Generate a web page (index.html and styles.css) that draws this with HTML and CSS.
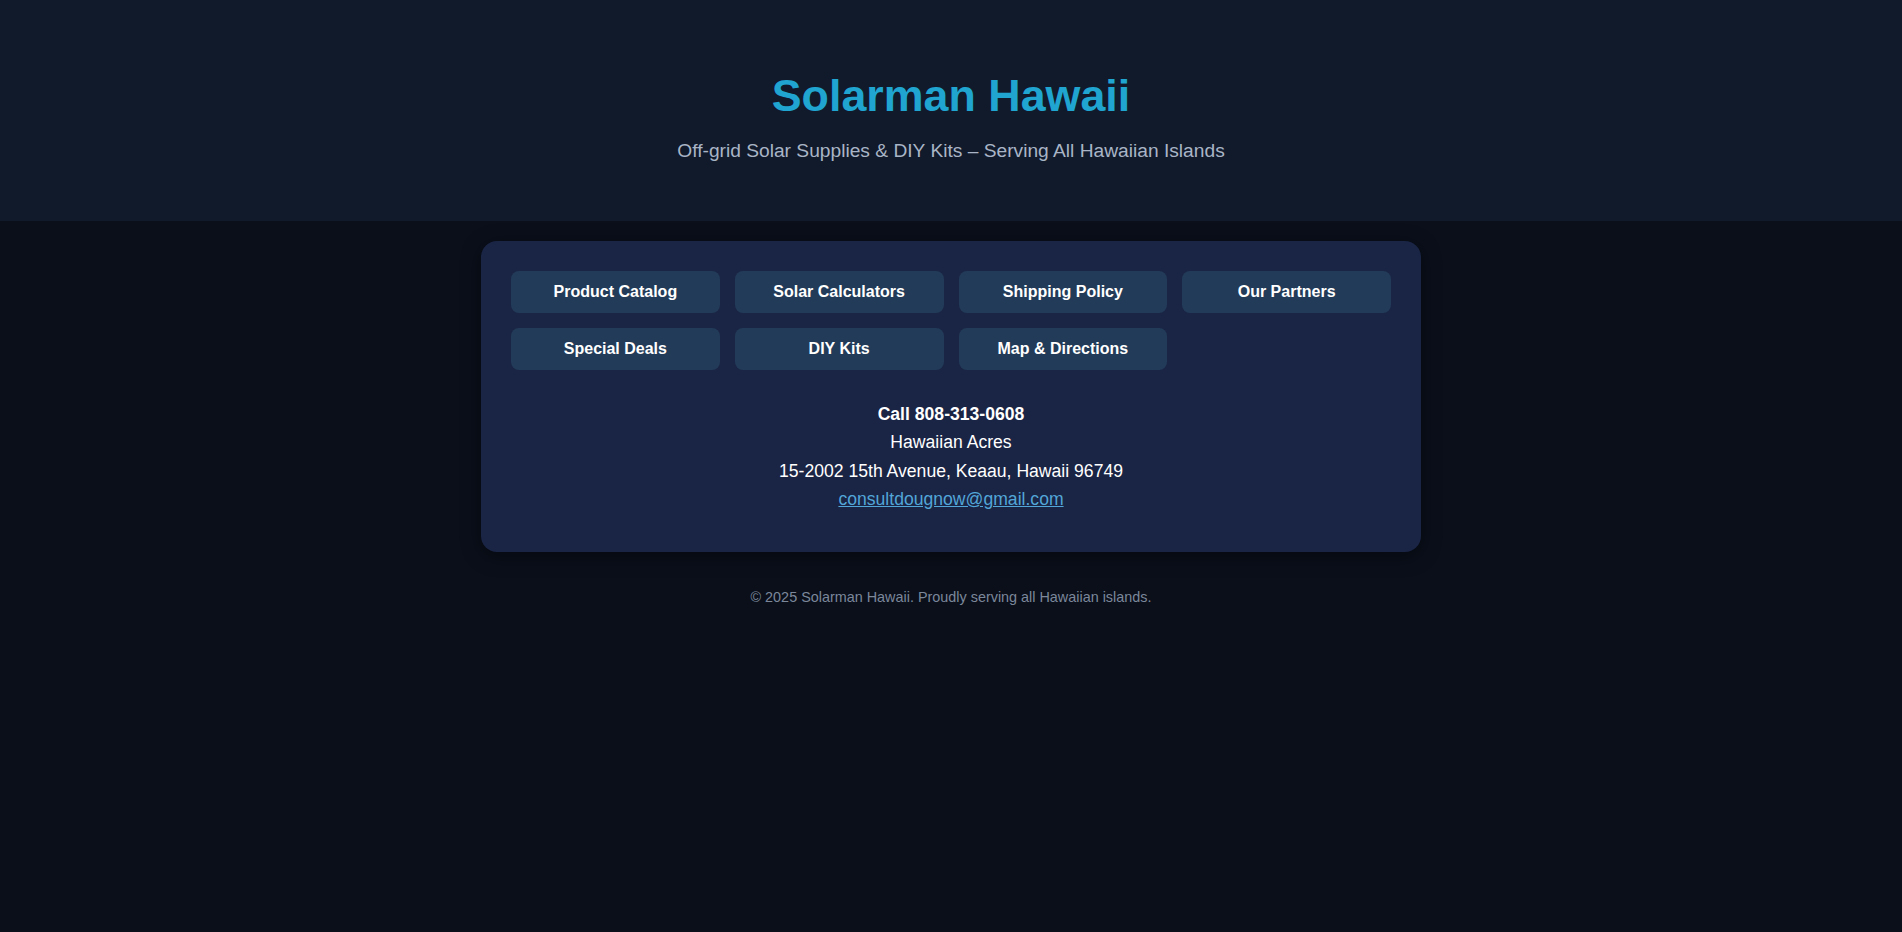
FILE: index.html
```html
<!DOCTYPE html>
<html lang="en">
<head>
<meta charset="utf-8">
<title>Solarman Hawaii</title>
<link rel="stylesheet" href="styles.css">
</head>
<body>
<header class="site-header">
  <h1 class="site-title">Solarman Hawaii</h1>
  <p class="site-tagline">Off-grid Solar Supplies &amp; DIY Kits – Serving All Hawaiian Islands</p>
</header>
<main class="card">
  <nav class="nav-grid">
    <a class="nav-btn" href="#">Product Catalog</a>
    <a class="nav-btn" href="#">Solar Calculators</a>
    <a class="nav-btn" href="#">Shipping Policy</a>
    <a class="nav-btn" href="#">Our Partners</a>
    <a class="nav-btn" href="#">Special Deals</a>
    <a class="nav-btn" href="#">DIY Kits</a>
    <a class="nav-btn" href="#">Map &amp; Directions</a>
  </nav>
  <div class="contact">
    <div class="contact-call">Call 808-313-0608</div>
    <div>Hawaiian Acres</div>
    <div>15-2002 15th Avenue, Keaau, Hawaii 96749</div>
    <div><a class="contact-email" href="#">consultdougnow@gmail.com</a></div>
  </div>
</main>
<footer class="site-footer">© 2025 Solarman Hawaii. Proudly serving all Hawaiian islands.</footer>
</body>
</html>
```

FILE: styles.css
```css
html, body {
  margin: 0;
  padding: 0;
}
body {
  background: #0a0f1a;
  font-family: "Liberation Sans", Arial, sans-serif;
  color: #ffffff;
  min-height: 100vh;
}
.site-header {
  background: #111a2b;
  padding: 70px 20px 40px;
  text-align: center;
}
.site-title {
  margin: 0;
  font-size: 44.8px;
  font-weight: 700;
  color: #20a4d0;
  line-height: 1.15;
}
.site-tagline {
  margin: 18px 0 19px;
  font-size: 19.2px;
  color: #a9b5c6;
  line-height: 1.15;
}
.card {
  width: 940px;
  box-sizing: border-box;
  margin: 20px auto 0;
  background: #1a2444;
  border-radius: 16px;
  padding: 30px 30px 38px;
  box-shadow: 0 4px 20px rgba(0, 0, 0, 0.45);
}
.nav-grid {
  display: grid;
  grid-template-columns: repeat(4, 1fr);
  gap: 15px;
}
.nav-btn {
  display: block;
  background: #223b58;
  color: #ffffff;
  text-decoration: none;
  font-weight: 700;
  font-size: 16px;
  line-height: 18px;
  padding: 12px 0;
  text-align: center;
  border-radius: 8px;
}
.contact {
  padding-top: 30px;
  text-align: center;
  font-size: 17.6px;
  line-height: 1.62;
  color: #ffffff;
}
.contact-call {
  font-weight: 700;
}
.contact-email {
  color: #52a6d8;
  text-decoration: underline;
}
.site-footer {
  padding: 37px 20px;
  text-align: center;
  font-size: 14.4px;
  color: #7c879a;
}
```
